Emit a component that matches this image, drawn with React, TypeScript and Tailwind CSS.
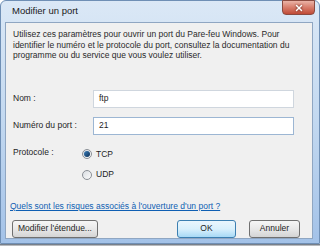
import { X } from "lucide-react"

const font = { fontFamily: '"Liberation Sans", Arial, sans-serif' }

const Radio = ({ checked }: { checked?: boolean }) => (
  <span className="flex items-center justify-center w-[10px] h-[10px] rounded-full border border-[#8a8f96] bg-gradient-to-br from-[#d9dde2] to-[#fbfbfb]">
    {checked ? (
      <span className="w-[6px] h-[6px] rounded-full bg-gradient-to-br from-[#3a80bd] to-[#0d2f55]" />
    ) : null}
  </span>
)

const Button = ({ children, primary, className = "" }: { children: React.ReactNode; primary?: boolean; className?: string }) => (
  <button
    className={
      "h-[18px] rounded-[3px] border text-[8.5px] text-[#1e1e1e] flex items-center justify-center " +
      (primary
        ? "border-[#3c7fb1] bg-gradient-to-b from-[#eaf6fd] via-[#d9f0fc] to-[#a7d9f5] "
        : "border-[#707070] bg-gradient-to-b from-[#f6f6f6] via-[#e8e8e8] to-[#d4d4d4] ") +
      className
    }
  >
    {children}
  </button>
)

export default function App() {
  return (
    <div className="w-[320px] h-[246px] bg-white flex flex-col overflow-hidden" style={font}>
      {/* Window frame */}
      <div className="h-[244px] flex flex-col rounded-t-[6px] border border-[#6f8fb5] bg-gradient-to-b from-[#dbe8f6] via-[#c2d8f0] to-[#a3c2e8] pl-[4px] pr-[6px] pb-[4px]">
        {/* Title bar */}
        <div className="relative h-[21px] flex items-center pl-[7px]">
          <span className="text-[9.5px] text-[#1a1a1a]">Modifier un port</span>
          <div className="absolute right-[-2px] top-[-1px] w-[33px] h-[15px] rounded-b-[4px] border border-[#8a4a40] bg-gradient-to-b from-[#eab3a7] via-[#d77c6b] to-[#c04a36] flex items-center justify-center">
            <X size={10} strokeWidth={3.5} className="text-white drop-shadow-[0_0_1px_#5a1a10]" />
          </div>
        </div>

        {/* Client area */}
        <div className="flex-1 flex flex-col bg-[#f0f0f0] border border-[#8fa6c2] px-[7px] pt-[6px] text-[#1e1e1e]">
          <div className="text-[8.5px] leading-[10.5px] text-[#2a2a2a] whitespace-nowrap">
            <div>Utilisez ces paramètres pour ouvrir un port du Pare-feu Windows. Pour</div>
            <div>identifier le numéro et le protocole du port, consultez la documentation du</div>
            <div>programme ou du service que vous voulez utiliser.</div>
          </div>

          <div className="mt-[29px] grid grid-cols-[80px_1fr] items-center gap-y-[9px] pr-[11px] text-[8.5px]">
            <span>Nom :</span>
            <div className="h-[18px] bg-white border border-[#cfd6de] flex items-center px-[5px]">ftp</div>
            <span>Numéro du port :</span>
            <div className="h-[18px] bg-white border border-[#9cb6d3] flex items-center px-[5px]">21</div>
          </div>

          <div className="mt-[13px] flex text-[8.5px]">
            <span className="w-[69px] mt-[-2px]">Protocole :</span>
            <div className="flex flex-col gap-[8px]">
              <label className="flex items-center gap-[4px]">
                <Radio checked />
                <span>TCP</span>
              </label>
              <label className="flex items-center gap-[4px]">
                <Radio />
                <span>UDP</span>
              </label>
            </div>
          </div>

          <a className="mt-[19px] -ml-[3px] text-[8.5px] text-[#0f5fb3] underline">
            Quels sont les risques associés à l'ouverture d'un port ?
          </a>

          <div className="mt-[7px] -ml-[1px] flex items-center pr-[5px]">
            <Button className="w-[86px]">Modifier l'étendue...</Button>
            <Button primary className="w-[59px] ml-auto">OK</Button>
            <Button className="w-[51px] ml-[13px]">Annuler</Button>
          </div>
        </div>
      </div>
      <div className="flex-1 bg-gradient-to-b from-[#5a6472] to-[#d8d8d8]" />
    </div>
  )
}
